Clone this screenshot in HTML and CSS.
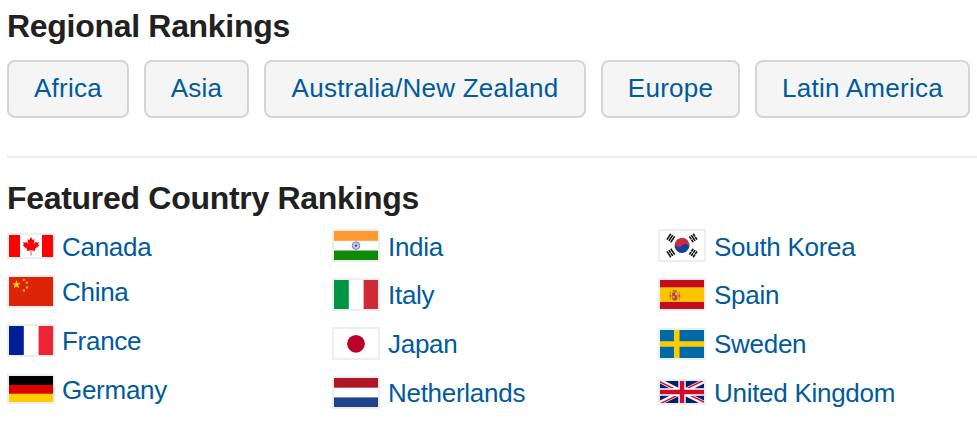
FILE: index.html
```html
<!DOCTYPE html>
<html lang="en">
<head>
  <meta charset="UTF-8" />
  <meta name="viewport" content="width=device-width, initial-scale=1.0"/>
  <title>Rankings</title>
  <link rel="stylesheet" href="styles.css">
</head>
<body>

<section class="regions">
  <h2>Regional Rankings</h2>
  <div class="region-list">
    <a class="btn" href="#">Africa</a>
    <a class="btn btn-asia" href="#">Asia</a>
    <a class="btn btn-anz" href="#">Australia/New Zealand</a>
    <a class="btn btn-europe" href="#">Europe</a>
    <a class="btn btn-latin" href="#">Latin America</a>
  </div>
</section>

<section class="countries">
  <h2>Featured Country Rankings</h2>
  <div class="columns">
    <ul class="first">
      <li class="canada">
        <svg class="flag" width="44" height="22" viewBox="0 0 44 22">
          <rect width="44" height="22" fill="#fff"/>
          <path fill="#f00" d="M0 0h11v22H0zM33 0h11v22H33z"/>
          <path fill="#f00" d="M22 2l1.7 3.1 1.8-.9-.8 4.7 2.4-2.4.5 1.2 2.4-.4-.8 2.4 1.1.7-4.4 3.7.4 1.8-4-.6.1 5.2h-.8l.1-5.2-4 .6.4-1.8-4.4-3.7 1.1-.7-.8-2.4 2.4.4.5-1.2 2.4 2.4-.8-4.7 1.8.9z"/>
        </svg>
        <a href="#">Canada</a>
      </li>
      <li>
        <svg class="flag" width="44" height="29" viewBox="0 0 44 29">
          <rect width="44" height="29" fill="#de2408"/>
          <path fill="#ffde00" d="M7.5 3l1 3.2h3.3L9.1 8.100l1 3.200-2.600-2-2.700 2 1-3.200L3.200 6.200h3.300z"/>
          <path fill="#ffde00" d="M14.200 1.700l.9.500.8-.4-.2 1 .6.800-1 .1-.5.800-.4-1-1-.2.800-.6zM17.300 4.400l.7.600.9-.2-.4.900.5.800-1-.1-.7.700-.1-1-.9-.5.900-.3zM18 9l.5.800h1l-.7.800.3.900-.9-.3-.9.500v-1l-.8-.7 1-.2zM14.900 12l.5.800h1l-.6.800.2 1-.9-.4-.9.500v-1l-.7-.7 1-.2z"/>
        </svg>
        <a href="#">China</a>
      </li>
      <li>
        <svg class="flag" width="44" height="29" viewBox="0 0 44 29">
          <rect width="44" height="29" fill="#fff"/>
          <rect width="14.800" height="29" fill="#001e96"/>
          <rect x="29.600" width="14.400" height="29" fill="#ee2436"/>
        </svg>
        <a href="#">France</a>
      </li>
      <li>
        <svg class="flag flag-de" width="44" height="26" viewBox="0 0 44 26">
          <rect width="44" height="26" fill="#ffce00"/>
          <rect width="44" height="17.700" fill="#d00"/>
          <rect width="44" height="9" fill="#000"/>
        </svg>
        <a href="#">Germany</a>
      </li>
    </ul>
    <ul>
      <li class="top">
        <svg class="flag" width="44" height="29" viewBox="0 0 44 29">
          <rect width="44" height="29" fill="#fff"/>
          <rect width="44" height="9.800" fill="#f93"/>
          <rect y="19.500" width="44" height="9.500" fill="#128807"/>
          <circle cx="22" cy="14.600" r="3.800" fill="#e4e4f5" stroke="#5a5ab4" stroke-width=".8"/>
          <circle cx="22" cy="14.600" r="2.500" fill="none" stroke="#9a9ad2" stroke-width="1.500" stroke-dasharray=".6 .7"/>
          <circle cx="22" cy="14.600" r="1.200" fill="#34349c"/>
        </svg>
        <a href="#">India</a>
      </li>
      <li>
        <svg class="flag" width="44" height="29" viewBox="0 0 44 29">
          <rect width="44" height="29" fill="#fff"/>
          <rect width="14.800" height="29" fill="#009445"/>
          <rect x="29.600" width="14.400" height="29" fill="#cf2a37"/>
        </svg>
        <a href="#">Italy</a>
      </li>
      <li>
        <svg class="flag" width="44" height="29" viewBox="0 0 44 29">
          <rect width="44" height="29" fill="#fff"/>
          <circle cx="22" cy="14.800" r="8.900" fill="#bd0029"/>
        </svg>
        <a href="#">Japan</a>
      </li>
      <li>
        <svg class="flag" width="44" height="29" viewBox="0 0 44 29">
          <rect width="44" height="29" fill="#fff"/>
          <rect width="44" height="9.700" fill="#ae1726"/>
          <rect y="19.400" width="44" height="9.600" fill="#1d448b"/>
        </svg>
        <a href="#">Netherlands</a>
      </li>
    </ul>
    <ul>
      <li class="top">
        <svg class="flag" width="44" height="29" viewBox="0 0 44 29">
          <rect width="44" height="29" fill="#fff"/>
          <g transform="rotate(33.700 22 14.500)">
            <circle cx="22" cy="14.500" r="7.400" fill="#0c449c"/>
            <path fill="#d2293b" d="M14.600 14.500a7.400 7.400 0 0 1 14.800 0 3.700 3.700 0 0 0-7.400 0 3.700 3.700 0 0 1-7.400 0z"/>
          </g>
          <g stroke="#111" stroke-width="1.600">
            <g transform="translate(10.800 7) rotate(-56.300)">
              <path d="M-3.500-2.300h7M-3.500 0h7M-3.500 2.300h7"/>
            </g>
            <g transform="translate(33.200 22) rotate(-56.300)">
              <path d="M-3.500-2.300h3.200M.3-2.300h3.200M-3.500 0h3.200M.3 0h3.200M-3.500 2.300h3.200M.3 2.300h3.200"/>
            </g>
            <g transform="translate(33.200 7) rotate(56.300)">
              <path d="M-3.500-2.300h3.200M.3-2.300h3.200M-3.500 0h7M-3.500 2.300h3.200M.3 2.300h3.200"/>
            </g>
            <g transform="translate(10.800 22) rotate(56.300)">
              <path d="M-3.500-2.300h7M-3.500 0h3.200M.3 0h3.200M-3.500 2.300h7"/>
            </g>
          </g>
        </svg>
        <a href="#">South Korea</a>
      </li>
      <li>
        <svg class="flag" width="44" height="29" viewBox="0 0 44 29">
          <rect width="44" height="29" fill="#c60b1e"/>
          <rect y="7.300" width="44" height="14.700" fill="#ffc400"/>
          <path fill="#c98a35" d="M9.800 11.500h1.300v8.500H9.800zM18.600 11.500h1.300v8.500h-1.300z"/>
          <path fill="#b8452a" d="M12.200 12.500h5.200v5.400q0 2.600-2.600 2.600t-2.600-2.600zM12.600 10.300h4.400l-.4 1.500H13zM9.300 15.500h2.300v1H9.300zM18.200 15.500h2.300v1h-2.300z"/>
          <path fill="#d9a08c" d="M15 13h2v2.500h-2zM12.700 16h2v2.300h-2z"/>
          <circle cx="14.800" cy="15.700" r=".8" fill="#5a4c96"/>
        </svg>
        <a href="#">Spain</a>
      </li>
      <li>
        <svg class="flag flag-se" width="44" height="28" viewBox="0 0 44 28">
          <rect width="44" height="28" fill="#006aa8"/>
          <path fill="#fecc00" d="M14 0h5.500v11.200H44v5.600H19.500V28H14V16.800H0v-5.600h14z"/>
        </svg>
        <a href="#">Sweden</a>
      </li>
      <li>
        <svg class="flag flag-uk" width="44" height="22" viewBox="0 0 44 22">
          <rect width="44" height="22" fill="#00206a"/>
          <path stroke="#fff" stroke-width="4.400" d="M0 0l44 22M44 0L0 22"/>
          <path fill="#cf0a2b" d="M0 0l14.700 7.300h-3.300L0 1.700zM44 0L29.300 7.300H26L40.700 0zM44 22l-14.700-7.300h3.300L44 20.300zM0 22l14.700-7.300H18L3.300 22z"/>
          <path fill="#fff" d="M18.300 0h7.400v7.300H44v7.400H25.700V22h-7.400v-7.300H0V7.300h18.300z"/>
          <path fill="#cf0a2b" d="M19.800 0h4.400v8.800H44v4.400H24.200V22h-4.400v-8.800H0V8.800h19.800z"/>
        </svg>
        <a href="#">United Kingdom</a>
      </li>
    </ul>
  </div>
</section>

</body>
</html>
```
FILE: styles.css
```css
body {
  margin: 0;
  padding: 8px 0 0 7px;
  font-family: "Liberation Sans", Arial, sans-serif;
  font-size: 26px;
  color: #212121;
  background: #fff;
}
h2 {
  margin: 0;
  font-size: 32px;
  line-height: 36px;
  letter-spacing: -0.3px;
}
a {
  color: #005a9c;
  text-decoration: none;
}
.regions {
  height: 148px;
  border-bottom: 2px solid #eee;
}
.region-list {
  display: flex;
  gap: 15px;
  margin-top: 16px;
}
.btn {
  box-sizing: border-box;
  width: 122px;
  height: 58px;
  border: 2px solid #d5d5d5;
  border-radius: 8px;
  background: #f5f5f5;
  line-height: 53px;
  letter-spacing: 0.25px;
  text-align: center;
  white-space: nowrap;
}
.btn-asia {
  width: 105px;
}
.btn-anz {
  width: 322px;
}
.btn-europe {
  width: 139px;
}
.btn-latin {
  width: 215px;
}
.countries {
  padding-top: 22px;
}
.columns {
  display: grid;
  grid-template-columns: 325px 326px 1fr;
  margin-top: 13px;
}
ul {
  display: flex;
  flex-direction: column;
  gap: 16px;
  margin: 0;
  padding: 0;
  list-style: none;
}
li {
  display: flex;
  align-items: center;
  height: 33px;
  line-height: 34px;
  letter-spacing: -0.28px;
  white-space: nowrap;
}
.canada a {
  padding-top: 2px;
}
.top a {
  padding-top: 3px;
}
.canada {
  height: 26px;
  margin-top: 4px;
}
.flag {
  flex: none;
  margin-right: 8px;
  border: 2px solid #eee;
}
.first .flag {
  margin-right: 7px;
}
.flag-de,
.flag-uk {
  margin-bottom: 1px;
}
.flag-se {
  margin-top: 1px;
}
```
